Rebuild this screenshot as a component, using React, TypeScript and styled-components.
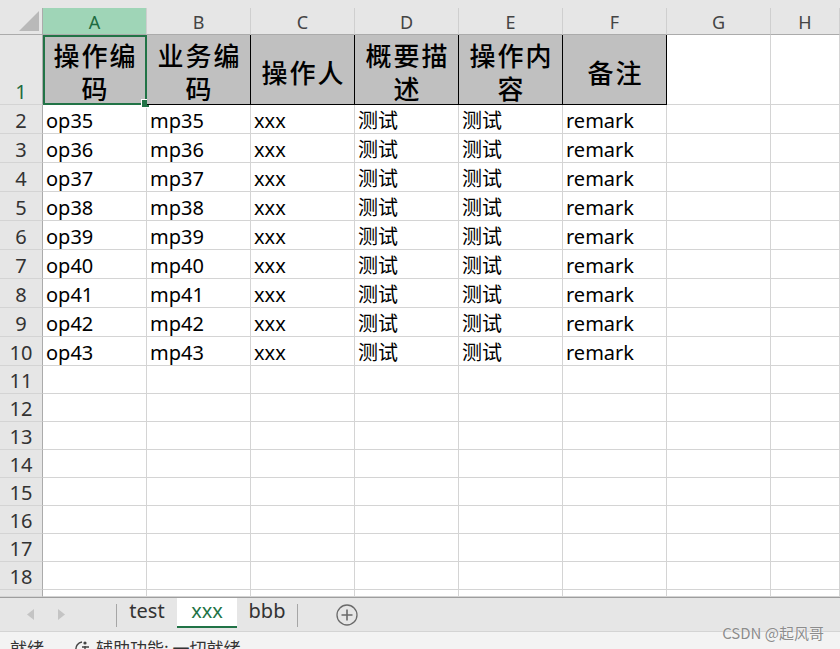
import { ReactElement, Fragment } from "react";
import styled, { createGlobalStyle } from "styled-components";

const GlobalStyle = createGlobalStyle`
  html, body {
    margin: 0;
    padding: 0;
    background: #ffffff;
  }
  body {
    width: 840px;
    height: 649px;
    overflow: hidden;
    font-family: "Noto Sans", "Noto Sans CJK SC", sans-serif;
  }
  * {
    box-sizing: border-box;
  }
`;

const Window = styled.div`
  display: flex;
  flex-direction: column;
  width: 840px;
  height: 649px;
  overflow: hidden;
  background: #e6e6e6;
`;

const TopStrip = styled.div`
  height: 8px;
  background: #e6e6e6;
  flex-shrink: 0;
`;

const Sheet = styled.div`
  display: grid;
  grid-template-columns: 43px repeat(7, 104px) 1fr;
  grid-template-rows: 27px 70px repeat(9, 29px) repeat(8, 28px) 7px;
  background: #ffffff;
  flex-shrink: 0;
`;

const Corner = styled.div`
  position: relative;
  background: #e6e6e6;
  border-right: 1px solid #ababab;
  border-bottom: 1px solid #ababab;

  &::after {
    content: "";
    position: absolute;
    right: 3px;
    bottom: 3px;
    width: 0;
    height: 0;
    border-left: 20px solid transparent;
    border-bottom: 20px solid #b9b9b9;
  }
`;

const ColHead = styled.div<{ $active?: boolean }>`
  display: flex;
  align-items: center;
  justify-content: center;
  background: ${(p) => (p.$active ? "#9fd5b7" : "#e6e6e6")};
  color: ${(p) => (p.$active ? "#1e6b41" : "#444444")};
  border-right: 1px solid #cfcfcf;
  border-bottom: 1px solid #ababab;
  font-size: 18px;
  padding-top: 2px;
`;

const RowHead = styled.div<{ $active?: boolean }>`
  display: flex;
  align-items: flex-end;
  justify-content: center;
  background: #e6e6e6;
  color: ${(p) => (p.$active ? "#1e6b41" : "#333333")};
  border-right: 1px solid #ababab;
  border-bottom: 1px solid #d4d4d4;
  font-size: 20px;
  line-height: 24px;
`;

const Cell = styled.div`
  display: flex;
  align-items: flex-end;
  padding: 0 0 0 3px;
  border-right: 1px solid #d4d4d4;
  border-bottom: 1px solid #d4d4d4;
  color: #000000;
  font-size: 20px;
  line-height: 24px;
  white-space: nowrap;
  overflow: hidden;
`;

const HeadCell = styled.div<{ $selected?: boolean }>`
  position: relative;
  display: flex;
  align-items: center;
  justify-content: center;
  text-align: center;
  background: #c0c0c0;
  border-right: 1px solid #000000;
  border-bottom: 1px solid #000000;
  color: #000000;
  font-family: "Noto Sans CJK SC", sans-serif;
  font-weight: 500;
  font-size: 26px;
  line-height: 33px;
  letter-spacing: 2px;
  padding: 3px 0 0 2px;
  word-break: break-all;

  ${(p) =>
    p.$selected &&
    `
    &::before {
      content: "";
      position: absolute;
      left: 0;
      top: 0;
      right: -1px;
      bottom: -1px;
      border: 2px solid #217346;
    }
    &::after {
      content: "";
      position: absolute;
      right: -4px;
      bottom: -4px;
      width: 7px;
      height: 7px;
      background: #217346;
      border: 1px solid #ffffff;
    }
  `}
`;

const TabBar = styled.div`
  display: flex;
  align-items: stretch;
  height: 34px;
  background: #e6e6e6;
  border-top: 1px solid #9e9e9e;
  flex-shrink: 0;
`;

const NavArrows = styled.div`
  display: flex;
  align-items: center;
  gap: 22px;
  width: 116px;
  padding-left: 27px;
`;

const Divider = styled.div`
  width: 1px;
  margin: 6px 0 4px;
  background: #a6a6a6;
`;

const Tab = styled.div<{ $active?: boolean }>`
  display: flex;
  justify-content: center;
  align-items: flex-start;
  width: 60px;
  padding-top: 1px;
  margin-bottom: 3px;
  font-size: 20px;
  line-height: 24px;
  color: ${(p) => (p.$active ? "#217346" : "#333333")};
  background: ${(p) => (p.$active ? "#ffffff" : "transparent")};
  border-bottom: 2px solid ${(p) => (p.$active ? "#217346" : "transparent")};
`;

const AddButton = styled.div`
  display: flex;
  align-items: center;
  margin-left: 38px;
`;

const StatusBar = styled.div`
  position: relative;
  flex: 1;
  display: flex;
  align-items: flex-start;
  gap: 28px;
  padding: 6px 0 0 10px;
  background: #f3f3f3;
  border-top: 1px solid #d4d4d4;
  font-family: "Noto Sans CJK SC", sans-serif;
  font-size: 17px;
  line-height: 20px;
  color: #333333;
  white-space: nowrap;
`;

const StatusItem = styled.div`
  display: flex;
  align-items: center;
  gap: 4px;
`;

const Watermark = styled.div`
  position: absolute;
  right: 16px;
  top: -9px;
  font-family: "Noto Sans CJK SC", sans-serif;
  font-size: 15px;
  color: #8c8c8c;
  text-shadow: 0 0 1px #ffffff;
`;

const columns = ["A", "B", "C", "D", "E", "F", "G", "H"];
const headers = ["操作编码", "业务编码", "操作人", "概要描述", "操作内容", "备注"];

const rows = Array.from({ length: 9 }, (_, i) => {
  const n = 35 + i;
  return [`op${n}`, `mp${n}`, "xxx", "测试", "测试", "remark"];
});

function ArrowLeft(): ReactElement {
  return (
    <svg width="8" height="11" viewBox="0 0 8 11">
      <path d="M7 0 L0 5.5 L7 11 Z" fill="#c4c4c4" />
    </svg>
  );
}

function ArrowRight(): ReactElement {
  return (
    <svg width="8" height="11" viewBox="0 0 8 11">
      <path d="M1 0 L8 5.5 L1 11 Z" fill="#c4c4c4" />
    </svg>
  );
}

function PlusCircle(): ReactElement {
  return (
    <svg width="22" height="22" viewBox="0 0 22 22">
      <circle cx="11" cy="11" r="10" fill="none" stroke="#6a6a6a" strokeWidth="1.3" />
      <path d="M11 5.5 V16.5 M5.5 11 H16.5" stroke="#6a6a6a" strokeWidth="1.6" />
    </svg>
  );
}

function AccessIcon(): ReactElement {
  return (
    <svg width="20" height="20" viewBox="0 0 20 20">
      <path d="M4 12 A7 7 0 0 1 10 4" fill="none" stroke="#444" strokeWidth="1.4" />
      <circle cx="13" cy="5" r="1.6" fill="#444" />
      <path d="M10 9 H17 M13 8 V13 L10 18 M13 13 L16 18" fill="none" stroke="#444" strokeWidth="1.4" />
    </svg>
  );
}

function App(): ReactElement {
  return (
    <Window>
      <GlobalStyle />
      <TopStrip />
      <Sheet>
        <Corner />
        {columns.map((c, i) => (
          <ColHead key={c} $active={i === 0}>
            {c}
          </ColHead>
        ))}

        <RowHead $active>1</RowHead>
        {headers.map((h, i) => (
          <HeadCell key={h} $selected={i === 0}>
            {h}
          </HeadCell>
        ))}
        <Cell />
        <Cell />

        {rows.map((r, i) => (
          <Fragment key={`r${i}`}>
            <RowHead>{i + 2}</RowHead>
            {r.map((v, j) => (
              <Cell key={j}>{v}</Cell>
            ))}
            <Cell />
            <Cell />
          </Fragment>
        ))}

        {Array.from({ length: 9 }, (_, i) => (
          <Fragment key={`e${i}`}>
            <RowHead>{i < 8 ? i + 11 : ""}</RowHead>
            {columns.map((c) => (
              <Cell key={c} />
            ))}
          </Fragment>
        ))}
      </Sheet>

      <TabBar>
        <NavArrows>
          <ArrowLeft />
          <ArrowRight />
        </NavArrows>
        <Divider />
        <Tab>test</Tab>
        <Tab $active>xxx</Tab>
        <Tab>bbb</Tab>
        <Divider />
        <AddButton>
          <PlusCircle />
        </AddButton>
      </TabBar>

      <StatusBar>
        <StatusItem>就绪</StatusItem>
        <StatusItem>
          <AccessIcon />
          辅助功能: 一切就绪
        </StatusItem>
        <Watermark>CSDN @起风哥</Watermark>
      </StatusBar>
    </Window>
  );
}

export default App;
